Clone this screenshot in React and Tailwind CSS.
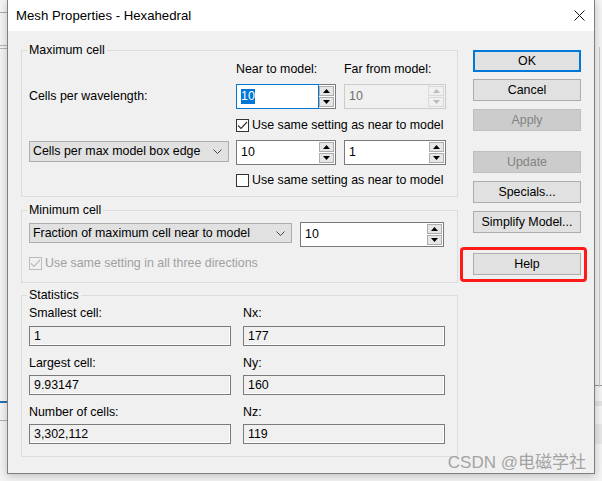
import React from "react";

const Tri = ({ up, color }) => (
  <svg width="7" height="4" viewBox="0 0 7 4">
    {up ? (
      <polygon points="0,4 7,4 3.5,0" fill={color} />
    ) : (
      <polygon points="0,0 7,0 3.5,4" fill={color} />
    )}
  </svg>
);

const Spin = ({ value, focused, disabled, className }) => {
  const arrow = disabled ? "#bdbdbd" : "#000";
  return (
    <div
      className={`flex h-[25px] ${className} ${
        disabled ? "border border-[#cccccc] bg-[#f0f0f0]" : "bg-white"
      }`}
    >
      <div
        className={`flex flex-1 items-center pl-[4px] ${
          disabled
            ? "text-[#6d6d6d]"
            : focused
            ? "border border-[#0078d7]"
            : "border border-r-0 border-[#7a7a7a]"
        }`}
      >
        {focused ? (
          <span className="bg-[#0078d7] text-white leading-[15px]">{value}</span>
        ) : (
          <span>{value}</span>
        )}
      </div>
      <div
        className={`flex w-[17px] flex-col justify-center gap-[1px] pr-[1px] ${
          disabled ? "" : "border border-l-0 border-[#7a7a7a]"
        }`}
      >
        <div
          className={`flex h-[10px] items-center justify-center border ${
            disabled ? "border-[#d9d9d9] bg-[#f0f0f0]" : "border-[#adadad] bg-[#e6e6e6]"
          }`}
        >
          <Tri up color={arrow} />
        </div>
        <div
          className={`flex h-[10px] items-center justify-center border ${
            disabled ? "border-[#d9d9d9] bg-[#f0f0f0]" : "border-[#adadad] bg-[#e6e6e6]"
          }`}
        >
          <Tri color={arrow} />
        </div>
      </div>
    </div>
  );
};

const Check = ({ checked, disabled }) => (
  <div
    className={`flex h-[13px] w-[13px] items-center justify-center border ${
      disabled ? "border-[#bcbcbc]" : "border-[#333333] bg-white"
    }`}
  >
    {checked && (
      <svg width="11" height="9" viewBox="0 0 11 9">
        <polyline
          points="1,4.5 4,7.5 10,1"
          fill="none"
          stroke={disabled ? "#bcbcbc" : "#333333"}
          strokeWidth="1.2"
        />
      </svg>
    )}
  </div>
);

const Combo = ({ label, className }) => (
  <div
    className={`flex items-center justify-between border border-[#adadad] bg-[#e1e1e1] pl-[3px] pr-[6px] ${className}`}
  >
    <span>{label}</span>
    <svg width="9" height="5" viewBox="0 0 9 5">
      <polyline points="0.5,0.5 4.5,4.5 8.5,0.5" fill="none" stroke="#444" strokeWidth="1" />
    </svg>
  </div>
);

const Btn = ({ children, primary, disabled }) => (
  <div
    className={`flex h-[22px] w-[108px] items-center justify-center ${
      primary
        ? "border-2 border-[#0078d7] bg-[#e1e1e1]"
        : disabled
        ? "border border-[#bfbfbf] bg-[#cccccc] text-[#838383]"
        : "border border-[#adadad] bg-[#e1e1e1]"
    }`}
  >
    {children}
  </div>
);

const Field = ({ value }) => (
  <div className="flex h-[20px] items-center border border-[#7a7a7a] bg-[#f0f0f0] pl-[4px] shadow-[inset_-1px_-1px_0_#ffffff]">
    {value}
  </div>
);

const App = () => {
  return (
    <div className="relative h-[481px] w-[602px] overflow-hidden bg-[#f3f3f3] text-[12.4px] text-black font-['Liberation_Sans',Arial,sans-serif]">
      {/* window behind the dialog */}
      <div className="absolute left-0 top-[12px] h-px w-[8px] bg-[#a8a8a8]" />
      <div className="absolute left-0 top-[45px] h-px w-[8px] bg-[#b4b4b4]" />
      <div className="absolute left-0 top-[48px] h-px w-[8px] bg-[#b4b4b4]" />
      <div className="absolute left-0 top-[401px] h-[2px] w-[8px] bg-[#2a6fb0]" />
      <div className="absolute left-0 top-[420px] h-px w-[8px] bg-[#b0b0b0]" />
      <div className="absolute right-0 top-[385px] h-px w-[8px] bg-[#9a9a9a]" />
      <div className="absolute right-0 top-[401px] h-[5px] w-[8px] bg-[#e2e2e2]" />
      <div className="absolute right-0 top-[424px] h-[20px] w-[8px] bg-[#e6e6e6]" />
      <div className="absolute right-[2px] top-[47px] h-[340px] w-px bg-[#c8c8c8]" />

      {/* dialog */}
      <div className="relative z-10 ml-[7px] flex h-[474px] w-[588px] flex-col border-x border-b border-[#7f7f7f] bg-[#f0f0f0] shadow-[0_2px_8px_rgba(0,0,0,0.22)]">
        {/* title bar */}
        <div className="flex h-[31px] items-center justify-between bg-white pl-[8px] pr-[9px]">
          <span className="text-[13.2px]">Mesh Properties - Hexahedral</span>
          <svg width="11" height="11" viewBox="0 0 11 11">
            <path d="M0.5 0.5 L10.5 10.5 M10.5 0.5 L0.5 10.5" stroke="#111" strokeWidth="1" />
          </svg>
        </div>

        <div className="flex flex-1 items-start pl-[13px]">
          {/* left column */}
          <div className="flex w-[437px] flex-col pt-[12px]">
            {/* Maximum cell */}
            <fieldset className="border border-[#dcdcdc] px-[7px] pb-[8px]">
              <legend className="-ml-[2px] px-[2px] leading-[14px]">Maximum cell</legend>
              <div className="mt-[5px] flex h-[15px] items-center pl-[207px]">
                <span className="w-[108px]">Near to model:</span>
                <span>Far from model:</span>
              </div>
              <div className="mt-[7px] flex h-[25px] items-center">
                <span className="w-[207px]">Cells per wavelength:</span>
                <Spin value="10" focused className="w-[100px]" />
                <Spin value="10" disabled className="ml-[8px] w-[102px]" />
              </div>
              <div className="mt-[8px] flex h-[16px] items-center gap-[3px] pl-[207px]">
                <Check checked />
                <span>Use same setting as near to model</span>
              </div>
              <div className="mt-[7px] flex h-[25px] items-start">
                <Combo label="Cells per max model box edge" className="mt-[1px] h-[21px] w-[200px]" />
                <Spin value="10" className="ml-[7px] w-[100px]" />
                <Spin value="1" className="ml-[8px] w-[102px]" />
              </div>
              <div className="mt-[7px] flex h-[16px] items-center gap-[3px] pl-[207px]">
                <Check />
                <span>Use same setting as near to model</span>
              </div>
            </fieldset>

            {/* Minimum cell */}
            <fieldset className="mt-[6px] border border-[#dcdcdc] px-[7px] pb-[11px]">
              <legend className="-ml-[2px] px-[2px] leading-[14px]">Minimum cell</legend>
              <div className="mt-[5px] flex h-[25px] items-start">
                <Combo label="Fraction of maximum cell near to model" className="mt-[1px] h-[20px] w-[263px]" />
                <Spin value="10" className="ml-[8px] w-[144px]" />
              </div>
              <div className="mt-[8px] flex h-[16px] items-center gap-[3px] text-[#a0a0a0]">
                <Check checked disabled />
                <span>Use same setting in all three directions</span>
              </div>
            </fieldset>

            {/* Statistics */}
            <fieldset className="mt-[5px] border border-[#dcdcdc] px-[7px] pb-[12px]">
              <legend className="-ml-[2px] px-[2px] leading-[14px]">Statistics</legend>
              <div className="grid grid-cols-[202px_202px] gap-x-[12px]">
                <span className="mt-[4px] leading-[14px]">Smallest cell:</span>
                <span className="mt-[4px] leading-[14px]">Nx:</span>
                <div className="mt-[6px]"><Field value="1" /></div>
                <div className="mt-[6px]"><Field value="177" /></div>
                <span className="mt-[10px] leading-[14px]">Largest cell:</span>
                <span className="mt-[10px] leading-[14px]">Ny:</span>
                <div className="mt-[5px]"><Field value="9.93147" /></div>
                <div className="mt-[5px]"><Field value="160" /></div>
                <span className="mt-[10px] leading-[14px]">Number of cells:</span>
                <span className="mt-[10px] leading-[14px]">Nz:</span>
                <div className="mt-[5px]"><Field value="3,302,112" /></div>
                <div className="mt-[5px]"><Field value="119" /></div>
              </div>
            </fieldset>
          </div>

          {/* buttons */}
          <div className="ml-[15px] flex w-[108px] flex-col pt-[19px]">
            <Btn primary>OK</Btn>
            <div className="mt-[7px]"><Btn>Cancel</Btn></div>
            <div className="mt-[8px]"><Btn disabled>Apply</Btn></div>
            <div className="mt-[20px]"><Btn disabled>Update</Btn></div>
            <div className="mt-[8px]"><Btn>Specials...</Btn></div>
            <div className="mt-[8px]"><Btn>Simplify Model...</Btn></div>
            <div className="relative mt-[20px]">
              <Btn>Help</Btn>
              <div className="pointer-events-none absolute -left-[13px] -right-[6px] -top-[6px] -bottom-[7px] rounded-[4px] border-[3px] border-[#ff1a1a]" />
            </div>
          </div>
        </div>
      </div>

      {/* watermark */}
      <div className="absolute bottom-[9px] right-[16px] z-20 text-[17px] leading-[18px] text-[#a3a3a3] font-['Liberation_Sans','Noto_Sans_CJK_SC',sans-serif]">
        CSDN @电磁学社
      </div>
    </div>
  );
};

export default App;
